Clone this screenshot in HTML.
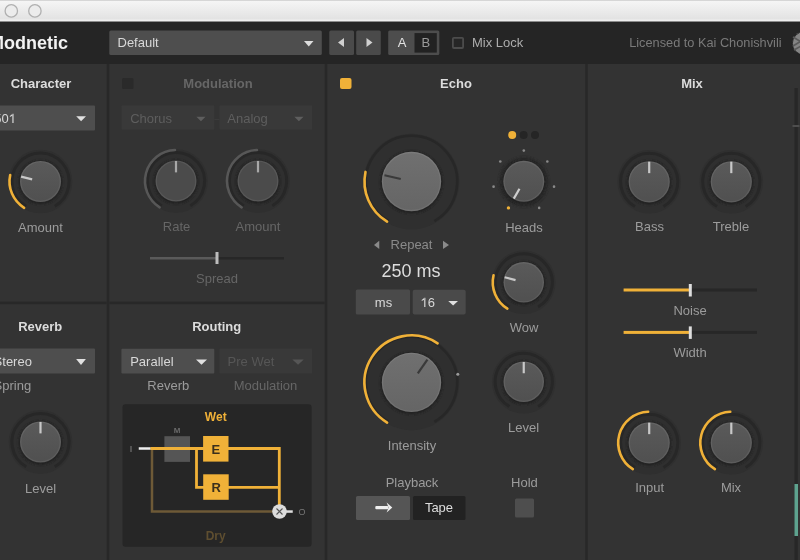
<!DOCTYPE html>
<html><head><meta charset="utf-8"><style>
html,body{margin:0;padding:0;background:#333;width:800px;height:560px;overflow:hidden}
svg{will-change:transform}
text{font-family:"Liberation Sans", sans-serif}
</style></head><body>
<svg width="800" height="560" viewBox="0 0 800 560" style="display:block"><defs><filter id="blur1" x="-50%" y="-50%" width="200%" height="200%"><feGaussianBlur stdDeviation="1"/></filter><linearGradient id="tb" x1="0" y1="0" x2="0" y2="1"><stop offset="0" stop-color="#f6f6f6"/><stop offset="0.85" stop-color="#e3e3e3"/><stop offset="0.92" stop-color="#efefef"/><stop offset="1" stop-color="#e8e8e8"/></linearGradient><linearGradient id="kbig" x1="0" y1="0" x2="0" y2="1"><stop offset="0" stop-color="#707070"/><stop offset="1" stop-color="#656565"/></linearGradient><linearGradient id="ksm" x1="0" y1="0" x2="0" y2="1"><stop offset="0" stop-color="#5a5a5a"/><stop offset="1" stop-color="#505050"/></linearGradient></defs><rect x="0" y="0" width="800" height="560" fill="#333333"/><rect x="0" y="0" width="800" height="22" fill="url(#tb)"/><rect x="0" y="21" width="800" height="1" fill="#8c8c8c"/><rect x="0" y="0" width="800" height="1" fill="#d6d6d6"/><circle cx="11.3" cy="10.9" r="6.2" fill="#ececec" stroke="#b0b0b0" stroke-width="1.3"/><circle cx="34.9" cy="10.9" r="6.2" fill="#ececec" stroke="#b0b0b0" stroke-width="1.3"/><rect x="0" y="22" width="800" height="42" fill="#252525"/><text x="68" y="48.5" font-size="18" fill="#f2f2f2" text-anchor="end" font-weight="bold" >Modnetic</text><rect x="109.3" y="30.6" width="212.5" height="24.5" rx="1.5" fill="#4e4e4e"/><text x="117.5" y="47" font-size="13" fill="#d8d8d8" text-anchor="start" font-weight="normal" >Default</text><polygon points="304,41 313.5,41 308.75,46.5" fill="#dddddd"/><rect x="329.3" y="30.6" width="24.7" height="24.5" rx="1.5" fill="#4a4a4a"/><polygon points="344,38 344,47 338,42.5" fill="#d0d0d0"/><rect x="356.2" y="30.6" width="24.6" height="24.5" rx="1.5" fill="#4a4a4a"/><polygon points="366.5,38 366.5,47 372.5,42.5" fill="#d0d0d0"/><rect x="388.2" y="30.6" width="51.1" height="24.5" rx="1.5" fill="#4d4d4d"/><rect x="414.5" y="33.1" width="22.3" height="19.5" fill="#222222"/><text x="402" y="47" font-size="13" fill="#e2e2e2" text-anchor="middle" font-weight="normal" >A</text><text x="425.8" y="47" font-size="13" fill="#9a9a9a" text-anchor="middle" font-weight="normal" >B</text><rect x="452.9" y="37.8" width="10.2" height="10.2" rx="1" fill="#262626" stroke="#4c4c4c" stroke-width="1.8"/><text x="472" y="47" font-size="13" fill="#adadad" text-anchor="start" font-weight="normal" >Mix Lock</text><text x="629.2" y="47" font-size="12.75" fill="#7a7a7a" text-anchor="start" font-weight="normal" >Licensed to Kai Chonishvili</text><circle cx="804" cy="43.3" r="11.6" fill="#858585" stroke="#1e1e1e" stroke-width="0.8"/><path d="M793,37 L803,43 M793,46 L803,40 M794,50 L803,45" stroke="#5a5a5a" stroke-width="1.6"/><rect x="0" y="301.4" width="325" height="3" fill="#2d2d2d"/><rect x="0" y="301.9" width="325" height="2" fill="#282828"/><rect x="106.5" y="64" width="3" height="496" fill="#2d2d2d"/><rect x="107" y="64" width="2" height="496" fill="#282828"/><rect x="324.5" y="64" width="3" height="496" fill="#2d2d2d"/><rect x="325" y="64" width="2" height="496" fill="#282828"/><rect x="585.0" y="64" width="3" height="496" fill="#2d2d2d"/><rect x="585.5" y="64" width="2" height="496" fill="#282828"/><text x="41" y="87.5" font-size="13" fill="#dcdcdc" text-anchor="middle" font-weight="bold" >Character</text><rect x="-12" y="105.5" width="107" height="25" rx="1" fill="#4e4e4e"/><text x="-5.8" y="123" font-size="13" fill="#d8d8d8" text-anchor="start" font-weight="normal" >50</text><path d="M12.36,123 V113.7 H13.56 V123 Z M12.56,113.7 L9.86,116.0 L9.86,117.1 L12.86,115.4 Z" fill="#d8d8d8"/><polygon points="76.2,116.3 86,116.3 81.1,121.3" fill="#e0e0e0"/><circle cx="40.5" cy="181.5" r="31.8" fill="#2f2f2f"/><path d="M26.20,206.27 A28.6,28.6 0 1 1 54.80,206.27" fill="none" stroke="#272727" stroke-width="3" stroke-linecap="butt" opacity="1"/><path d="M24.11,207.81 A31,31 0 0 1 10.19,175.01" fill="none" stroke="#f0b138" stroke-width="2.6" stroke-linecap="round" opacity="1"/><circle cx="40.5" cy="182.3" r="22.1" fill="#242424" filter="url(#blur1)"/><circle cx="40.5" cy="181.5" r="20.5" fill="url(#ksm)"/><circle cx="40.5" cy="181.5" r="19.8" fill="none" stroke="rgba(255,255,255,0.07)" stroke-width="1.3"/><line x1="32.15" y1="179.42" x2="21.09" y2="176.66" stroke="#c8c8c8" stroke-width="2.2"/><text x="40.5" y="232" font-size="13" fill="#9c9c9c" text-anchor="middle" font-weight="normal" >Amount</text><rect x="122" y="78" width="11.5" height="11" rx="1.5" fill="#2a2a2a"/><text x="218" y="87.5" font-size="13" fill="#666666" text-anchor="middle" font-weight="bold" >Modulation</text><rect x="121.5" y="105.2" width="92.8" height="24.6" rx="1" fill="#393939"/><rect x="219.4" y="105.2" width="92.7" height="24.6" rx="1" fill="#393939"/><rect x="214.3" y="118.8" width="5.1" height="1.2" fill="#3b3b3b"/><text x="130.2" y="123" font-size="13" fill="#5e5e5e" text-anchor="start" font-weight="normal" >Chorus</text><text x="227.3" y="123" font-size="13" fill="#5e5e5e" text-anchor="start" font-weight="normal" >Analog</text><polygon points="196.4,116.7 205.5,116.7 200.95,121.2" fill="#5e5e5e"/><polygon points="294.3,116.7 303.5,116.7 298.9,121.2" fill="#5e5e5e"/><circle cx="176" cy="181" r="31.8" fill="#2f2f2f"/><path d="M161.70,205.77 A28.6,28.6 0 1 1 190.30,205.77" fill="none" stroke="#272727" stroke-width="3" stroke-linecap="butt" opacity="1"/><path d="M159.61,207.31 A31,31 0 0 1 174.96,150.02" fill="none" stroke="#575757" stroke-width="2.6" stroke-linecap="round" opacity="1"/><circle cx="176" cy="181.8" r="22.1" fill="#242424" filter="url(#blur1)"/><circle cx="176" cy="181" r="20.5" fill="#4b4b4b"/><circle cx="176" cy="181" r="19.8" fill="none" stroke="rgba(255,255,255,0.07)" stroke-width="1.3"/><line x1="176.00" y1="172.39" x2="176.00" y2="161.00" stroke="#a8a8a8" stroke-width="2.2"/><circle cx="258" cy="181" r="31.8" fill="#2f2f2f"/><path d="M243.70,205.77 A28.6,28.6 0 1 1 272.30,205.77" fill="none" stroke="#272727" stroke-width="3" stroke-linecap="butt" opacity="1"/><path d="M241.61,207.31 A31,31 0 0 1 256.96,150.02" fill="none" stroke="#575757" stroke-width="2.6" stroke-linecap="round" opacity="1"/><circle cx="258" cy="181.8" r="22.1" fill="#242424" filter="url(#blur1)"/><circle cx="258" cy="181" r="20.5" fill="#4b4b4b"/><circle cx="258" cy="181" r="19.8" fill="none" stroke="rgba(255,255,255,0.07)" stroke-width="1.3"/><line x1="258.00" y1="172.39" x2="258.00" y2="161.00" stroke="#a8a8a8" stroke-width="2.2"/><text x="176.5" y="231" font-size="13" fill="#666666" text-anchor="middle" font-weight="normal" >Rate</text><text x="258" y="231" font-size="13" fill="#666666" text-anchor="middle" font-weight="normal" >Amount</text><rect x="150" y="257" width="67" height="2.5" fill="#5a5a5a"/><rect x="217" y="257" width="67" height="2.5" fill="#272727"/><rect x="215.5" y="252" width="3" height="12" fill="#bdbdbd"/><text x="217" y="282.6" font-size="13" fill="#666666" text-anchor="middle" font-weight="normal" >Spread</text><rect x="340" y="78" width="11.5" height="11" rx="2" fill="#f0b138"/><text x="456" y="87.5" font-size="13" fill="#dcdcdc" text-anchor="middle" font-weight="bold" >Echo</text><circle cx="411.5" cy="181.5" r="47.8" fill="#2f2f2f"/><path d="M388.65,221.08 A45.7,45.7 0 1 1 434.35,221.08" fill="none" stroke="#272727" stroke-width="2.6" stroke-linecap="butt" opacity="1"/><path d="M387.11,221.67 A47,47 0 0 1 365.48,171.94" fill="none" stroke="#f0b138" stroke-width="2.6" stroke-linecap="round" opacity="1"/><circle cx="411.5" cy="182.3" r="31.3" fill="#242424" filter="url(#blur1)"/><circle cx="411.5" cy="181.5" r="29.7" fill="url(#kbig)"/><circle cx="411.5" cy="181.5" r="29.0" fill="none" stroke="rgba(255,255,255,0.07)" stroke-width="1.3"/><line x1="400.78" y1="179.03" x2="384.51" y2="175.27" stroke="#3a3a3a" stroke-width="2.2"/><polygon points="379.25,240.75 379.25,249 374,244.9" fill="#8a8a8a"/><polygon points="443,240.75 443,249 449,244.9" fill="#8a8a8a"/><text x="411.5" y="249" font-size="13" fill="#8a8a8a" text-anchor="middle" font-weight="normal" >Repeat</text><text x="411" y="277.2" font-size="18" fill="#dddddd" text-anchor="middle" font-weight="normal" >250 ms</text><rect x="355.8" y="289.6" width="54.2" height="24.9" rx="1.5" fill="#4a4a4a"/><rect x="412.7" y="289.75" width="53" height="24.75" rx="2" fill="#4a4a4a"/><text x="383.5" y="307" font-size="13" fill="#d8d8d8" text-anchor="middle" font-weight="normal" >ms</text><path d="M424.2,307 V297.7 H425.4 V307 Z M424.4,297.7 L421.7,300.0 L421.7,301.1 L424.7,299.4 Z" fill="#d8d8d8"/><text x="427.73" y="307" font-size="13" fill="#d8d8d8" text-anchor="start" font-weight="normal" >6</text><polygon points="448.25,301 458,301 453.125,305.5" fill="#e0e0e0"/><circle cx="512.2" cy="135" r="4" fill="#f0b138"/><circle cx="523.6" cy="135" r="4" fill="#252525"/><circle cx="535" cy="135" r="4" fill="#252525"/><circle cx="508.45" cy="207.89" r="1.7" fill="#f0b138"/><circle cx="493.57" cy="186.63" r="1.3" fill="#8a8a8a"/><circle cx="500.28" cy="161.57" r="1.3" fill="#8a8a8a"/><circle cx="523.80" cy="150.60" r="1.3" fill="#8a8a8a"/><circle cx="547.32" cy="161.57" r="1.3" fill="#8a8a8a"/><circle cx="554.03" cy="186.63" r="1.3" fill="#8a8a8a"/><circle cx="539.15" cy="207.89" r="1.3" fill="#8a8a8a"/><circle cx="523.8" cy="182" r="25" fill="#2a2a2a" filter="url(#blur1)"/><circle cx="523.8" cy="182.10000000000002" r="22.1" fill="#242424" filter="url(#blur1)"/><circle cx="523.8" cy="181.3" r="20.5" fill="url(#ksm)"/><circle cx="523.8" cy="181.3" r="19.8" fill="none" stroke="rgba(255,255,255,0.07)" stroke-width="1.3"/><line x1="519.50" y1="188.76" x2="513.80" y2="198.62" stroke="#cfcfcf" stroke-width="2.2"/><text x="524" y="231.5" font-size="13" fill="#9c9c9c" text-anchor="middle" font-weight="normal" >Heads</text><circle cx="523.75" cy="282.3" r="31.8" fill="#2f2f2f"/><path d="M509.45,307.07 A28.6,28.6 0 1 1 538.05,307.07" fill="none" stroke="#272727" stroke-width="3" stroke-linecap="butt" opacity="1"/><path d="M507.36,308.61 A31,31 0 0 1 493.55,275.29" fill="none" stroke="#f0b138" stroke-width="2.6" stroke-linecap="round" opacity="1"/><circle cx="523.75" cy="283.1" r="21.85" fill="#242424" filter="url(#blur1)"/><circle cx="523.75" cy="282.3" r="20.25" fill="url(#ksm)"/><circle cx="523.75" cy="282.3" r="19.55" fill="none" stroke="rgba(255,255,255,0.07)" stroke-width="1.3"/><line x1="515.53" y1="280.10" x2="504.67" y2="277.19" stroke="#c8c8c8" stroke-width="2.2"/><text x="524" y="332" font-size="13" fill="#9c9c9c" text-anchor="middle" font-weight="normal" >Wow</text><circle cx="411.5" cy="382.4" r="47.8" fill="#2f2f2f"/><path d="M388.65,421.98 A45.7,45.7 0 1 1 434.35,421.98" fill="none" stroke="#272727" stroke-width="2.6" stroke-linecap="butt" opacity="1"/><path d="M387.11,422.57 A47,47 0 1 1 437.60,343.31" fill="none" stroke="#f0b138" stroke-width="2.6" stroke-linecap="round" opacity="1"/><circle cx="411.5" cy="383.2" r="31.3" fill="#242424" filter="url(#blur1)"/><circle cx="411.5" cy="382.4" r="29.7" fill="url(#kbig)"/><circle cx="411.5" cy="382.4" r="29.0" fill="none" stroke="rgba(255,255,255,0.07)" stroke-width="1.3"/><line x1="417.81" y1="373.39" x2="427.39" y2="359.71" stroke="#3a3a3a" stroke-width="2.2"/><circle cx="457.79" cy="374.24" r="1.5" fill="#9a9a9a"/><text x="412" y="450.4" font-size="13" fill="#9c9c9c" text-anchor="middle" font-weight="normal" >Intensity</text><circle cx="523.75" cy="381.75" r="31.8" fill="#2f2f2f"/><path d="M509.45,406.52 A28.6,28.6 0 1 1 538.05,406.52" fill="none" stroke="#272727" stroke-width="3" stroke-linecap="butt" opacity="1"/><circle cx="523.75" cy="382.55" r="21.85" fill="#242424" filter="url(#blur1)"/><circle cx="523.75" cy="381.75" r="20.25" fill="url(#ksm)"/><circle cx="523.75" cy="381.75" r="19.55" fill="none" stroke="rgba(255,255,255,0.07)" stroke-width="1.3"/><line x1="523.75" y1="373.25" x2="523.75" y2="362.00" stroke="#c8c8c8" stroke-width="2.2"/><text x="523.6" y="432" font-size="13" fill="#9c9c9c" text-anchor="middle" font-weight="normal" >Level</text><text x="412" y="486.5" font-size="13" fill="#9c9c9c" text-anchor="middle" font-weight="normal" >Playback</text><rect x="356" y="496" width="54" height="24" rx="1.5" fill="#555555"/><rect x="375.3" y="506" width="13" height="3.2" rx="1" fill="#eeeeee"/><polygon points="386.6,502.6 392.3,507.6 386.6,512.6 388.6,507.6" fill="#eeeeee"/><rect x="413" y="496" width="52.5" height="24" rx="1.5" fill="#222222"/><text x="439" y="512" font-size="13" fill="#dddddd" text-anchor="middle" font-weight="normal" >Tape</text><text x="524.4" y="487" font-size="13" fill="#9c9c9c" text-anchor="middle" font-weight="normal" >Hold</text><rect x="515" y="498.5" width="19" height="19" rx="1.5" fill="#4e4e4e"/><text x="692" y="87.5" font-size="13" fill="#dcdcdc" text-anchor="middle" font-weight="bold" >Mix</text><circle cx="649.2" cy="181.8" r="31.8" fill="#2f2f2f"/><path d="M634.90,206.57 A28.6,28.6 0 1 1 663.50,206.57" fill="none" stroke="#272727" stroke-width="3" stroke-linecap="butt" opacity="1"/><circle cx="649.2" cy="182.60000000000002" r="22.200000000000003" fill="#242424" filter="url(#blur1)"/><circle cx="649.2" cy="181.8" r="20.6" fill="url(#ksm)"/><circle cx="649.2" cy="181.8" r="19.900000000000002" fill="none" stroke="rgba(255,255,255,0.07)" stroke-width="1.3"/><line x1="649.20" y1="173.15" x2="649.20" y2="161.70" stroke="#c8c8c8" stroke-width="2.2"/><circle cx="731.3" cy="181.8" r="31.8" fill="#2f2f2f"/><path d="M717.00,206.57 A28.6,28.6 0 1 1 745.60,206.57" fill="none" stroke="#272727" stroke-width="3" stroke-linecap="butt" opacity="1"/><circle cx="731.3" cy="182.60000000000002" r="22.200000000000003" fill="#242424" filter="url(#blur1)"/><circle cx="731.3" cy="181.8" r="20.6" fill="url(#ksm)"/><circle cx="731.3" cy="181.8" r="19.900000000000002" fill="none" stroke="rgba(255,255,255,0.07)" stroke-width="1.3"/><line x1="731.30" y1="173.15" x2="731.30" y2="161.70" stroke="#c8c8c8" stroke-width="2.2"/><text x="649.5" y="231.4" font-size="13" fill="#9c9c9c" text-anchor="middle" font-weight="normal" >Bass</text><text x="731" y="231.4" font-size="13" fill="#9c9c9c" text-anchor="middle" font-weight="normal" >Treble</text><rect x="623.6" y="288.5" width="67" height="3" fill="#f0b138"/><rect x="690.5" y="288.5" width="66.5" height="3" fill="#272727"/><rect x="688.8" y="284" width="3" height="12.5" fill="#dddddd"/><text x="690" y="315" font-size="13" fill="#9c9c9c" text-anchor="middle" font-weight="normal" >Noise</text><rect x="623.6" y="330.9" width="67" height="3" fill="#f0b138"/><rect x="690.5" y="330.9" width="66.5" height="3" fill="#272727"/><rect x="688.8" y="326.4" width="3" height="12.5" fill="#dddddd"/><text x="690" y="357" font-size="13" fill="#9c9c9c" text-anchor="middle" font-weight="normal" >Width</text><circle cx="649.2" cy="442.8" r="31.8" fill="#2f2f2f"/><path d="M634.90,467.57 A28.6,28.6 0 1 1 663.50,467.57" fill="none" stroke="#272727" stroke-width="3" stroke-linecap="butt" opacity="1"/><path d="M632.81,469.11 A31,31 0 0 1 648.16,411.82" fill="none" stroke="#f0b138" stroke-width="2.6" stroke-linecap="round" opacity="1"/><circle cx="649.2" cy="443.6" r="22.200000000000003" fill="#242424" filter="url(#blur1)"/><circle cx="649.2" cy="442.8" r="20.6" fill="url(#ksm)"/><circle cx="649.2" cy="442.8" r="19.900000000000002" fill="none" stroke="rgba(255,255,255,0.07)" stroke-width="1.3"/><line x1="649.20" y1="434.15" x2="649.20" y2="422.70" stroke="#c8c8c8" stroke-width="2.2"/><circle cx="731.3" cy="442.8" r="31.8" fill="#2f2f2f"/><path d="M717.00,467.57 A28.6,28.6 0 1 1 745.60,467.57" fill="none" stroke="#272727" stroke-width="3" stroke-linecap="butt" opacity="1"/><path d="M714.91,469.11 A31,31 0 0 1 730.26,411.82" fill="none" stroke="#f0b138" stroke-width="2.6" stroke-linecap="round" opacity="1"/><circle cx="731.3" cy="443.6" r="22.200000000000003" fill="#242424" filter="url(#blur1)"/><circle cx="731.3" cy="442.8" r="20.6" fill="url(#ksm)"/><circle cx="731.3" cy="442.8" r="19.900000000000002" fill="none" stroke="rgba(255,255,255,0.07)" stroke-width="1.3"/><line x1="731.30" y1="434.15" x2="731.30" y2="422.70" stroke="#c8c8c8" stroke-width="2.2"/><text x="649.7" y="492" font-size="13" fill="#9c9c9c" text-anchor="middle" font-weight="normal" >Input</text><text x="731" y="492" font-size="13" fill="#9c9c9c" text-anchor="middle" font-weight="normal" >Mix</text><rect x="794.5" y="88" width="3.3" height="472" fill="#272727"/><rect x="792.5" y="125" width="7" height="2" fill="#4e4e4e"/><rect x="794.5" y="484" width="3.5" height="52" fill="#5ea38f"/><text x="40.2" y="331" font-size="13" fill="#dcdcdc" text-anchor="middle" font-weight="bold" >Reverb</text><rect x="-12" y="348.6" width="107" height="24.8" rx="1" fill="#4e4e4e"/><text x="-6.4" y="365.7" font-size="13" fill="#d8d8d8" text-anchor="start" font-weight="normal" >Stereo</text><polygon points="76.1,359.1 85.9,359.1 81.0,364.9" fill="#e0e0e0"/><text x="-6.4" y="389.7" font-size="13" fill="#9c9c9c" text-anchor="start" font-weight="normal" >Spring</text><circle cx="40.5" cy="442" r="31.8" fill="#2f2f2f"/><path d="M26.20,466.77 A28.6,28.6 0 1 1 54.80,466.77" fill="none" stroke="#272727" stroke-width="3" stroke-linecap="butt" opacity="1"/><circle cx="40.5" cy="442.8" r="22.1" fill="#242424" filter="url(#blur1)"/><circle cx="40.5" cy="442" r="20.5" fill="url(#ksm)"/><circle cx="40.5" cy="442" r="19.8" fill="none" stroke="rgba(255,255,255,0.07)" stroke-width="1.3"/><line x1="40.50" y1="433.39" x2="40.50" y2="422.00" stroke="#c8c8c8" stroke-width="2.2"/><text x="40.5" y="492.8" font-size="13" fill="#9c9c9c" text-anchor="middle" font-weight="normal" >Level</text><text x="216.7" y="331" font-size="13" fill="#dcdcdc" text-anchor="middle" font-weight="bold" >Routing</text><rect x="121.4" y="348.8" width="92.9" height="24.6" rx="1" fill="#4e4e4e"/><text x="130.2" y="365.6" font-size="13" fill="#d8d8d8" text-anchor="start" font-weight="normal" >Parallel</text><polygon points="196,359.4 207,359.4 201.5,364.8" fill="#e0e0e0"/><rect x="219.4" y="348.6" width="92.7" height="24.8" rx="1" fill="#393939"/><text x="227.6" y="365.6" font-size="13" fill="#565656" text-anchor="start" font-weight="normal" >Pre Wet</text><polygon points="292.4,359.4 303.75,359.4 298.075,364.8" fill="#565656"/><text x="168.3" y="390" font-size="13" fill="#9c9c9c" text-anchor="middle" font-weight="normal" >Reverb</text><text x="265.5" y="390" font-size="13" fill="#666666" text-anchor="middle" font-weight="normal" >Modulation</text><rect x="122.5" y="404.3" width="189.1" height="142.5" rx="3" fill="#262626"/><text x="215.75" y="420.6" font-size="12" fill="#f0b138" text-anchor="middle" font-weight="bold" >Wet</text><text x="131" y="452" font-size="9" fill="#8a8a8a" text-anchor="middle" font-weight="normal" >I</text><rect x="164.4" y="436.2" width="25.6" height="25.7" fill="#555555"/><text x="177.2" y="432.8" font-size="8" fill="#6a6a6a" text-anchor="middle" font-weight="bold" >M</text><path d="M152,448.5 V511.5 H279.5" fill="none" stroke="#6e5a37" stroke-width="2.5"/><rect x="138.75" y="447.25" width="12" height="2.5" fill="#eeeeee"/><path d="M150.5,448.5 H279.3 V511.5" fill="none" stroke="#f0b138" stroke-width="2.8"/><path d="M196.5,448.5 V487.3 H279.3" fill="none" stroke="#f0b138" stroke-width="2.8"/><rect x="203.1" y="436" width="25.4" height="25.6" fill="#f0b138"/><rect x="203.2" y="474.3" width="25.5" height="25.5" fill="#f0b138"/><text x="215.9" y="453.75" font-size="13" fill="#3a2f1c" text-anchor="middle" font-weight="bold" >E</text><text x="216.1" y="492" font-size="13" fill="#3a2f1c" text-anchor="middle" font-weight="bold" >R</text><rect x="280" y="510.3" width="12.75" height="2.5" fill="#dddddd"/><circle cx="279.5" cy="511.5" r="7.3" fill="#dcdcdc"/><path d="M276.5,508.5 L282.5,514.5 M282.5,508.5 L276.5,514.5" stroke="#555" stroke-width="1.1"/><text x="302" y="514.8" font-size="9" fill="#777777" text-anchor="middle" font-weight="normal" >O</text><text x="215.7" y="540" font-size="12" fill="#5e4e30" text-anchor="middle" font-weight="bold" >Dry</text></svg>
</body></html>
